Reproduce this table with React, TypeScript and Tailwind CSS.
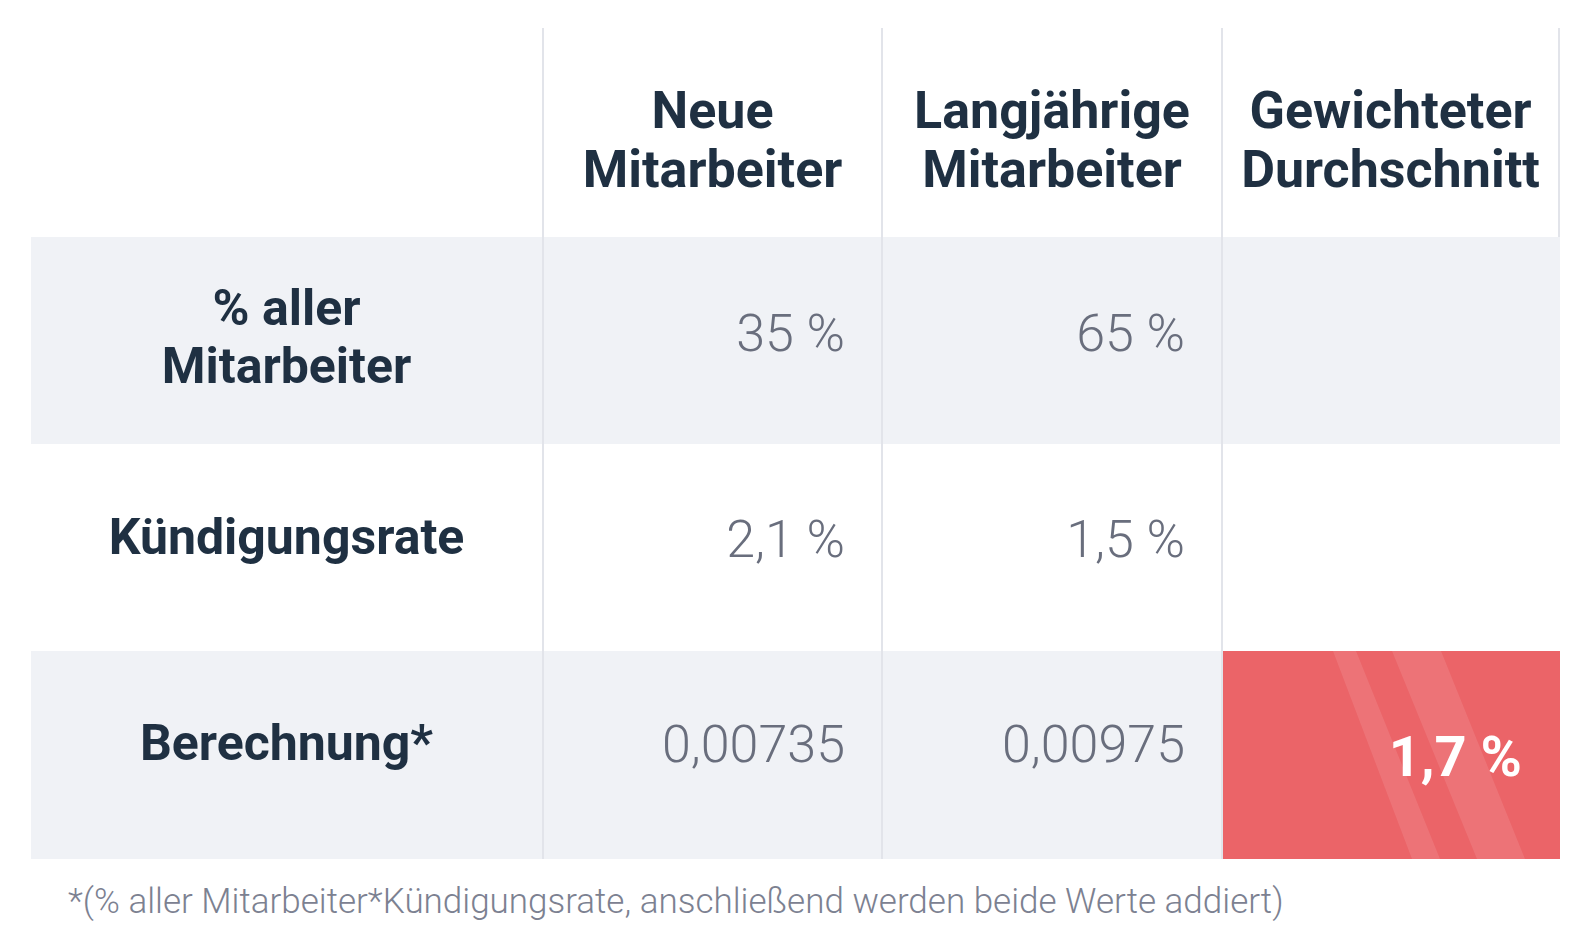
import React from "react";

const head = "font-['Roboto',sans-serif] font-bold text-[#1f3042]";
const num = "font-['Roboto',sans-serif] font-light text-[#696e7d] text-[52px] leading-[60px]";

function HeadCell({ lines, right = false }: { lines: string[]; right?: boolean }) {
  return (
    <div
      className={`flex items-center justify-center pt-[14px] border-l-2 border-[#e2e4ea] ${right ? "border-r-2" : ""}`}
    >
      <div className={`${head} text-[52px] leading-[59px] text-center`}>
        {lines.map((l) => (
          <div key={l}>{l}</div>
        ))}
      </div>
    </div>
  );
}

function LabelCell({ lines, shaded, pb }: { lines: string[]; shaded?: boolean; pb: string }) {
  return (
    <div className={`flex items-center justify-center ${pb} ${shaded ? "bg-[#f0f2f6]" : ""}`}>
      <div className={`${head} text-[50px] leading-[58px] text-center`}>
        {lines.map((l) => (
          <div key={l}>{l}</div>
        ))}
      </div>
    </div>
  );
}

function NumCell({ value, shaded, pb }: { value: string; shaded?: boolean; pb: string }) {
  return (
    <div className={`flex items-center justify-end pr-[36px] ${pb} border-l-2 border-[#e2e4ea] ${shaded ? "bg-[#f0f2f6]" : ""}`}>
      <span className={num}>{value}</span>
    </div>
  );
}

export default function App() {
  return (
    <div className="w-[1594px] h-[944px] bg-white pl-[31px] pt-[28px]">
      <div className="grid grid-cols-[511px_339px_340px_339px] grid-rows-[209px_207px_207px_208px]">
        <div />
        <HeadCell lines={["Neue", "Mitarbeiter"]} />
        <HeadCell lines={["Langjährige", "Mitarbeiter"]} />
        <HeadCell lines={["Gewichteter", "Durchschnitt"]} right />

        <LabelCell lines={["% aller", "Mitarbeiter"]} shaded pb="pb-[8px]" />
        <NumCell value="35 %" shaded pb="pb-[14px]" />
        <NumCell value="65 %" shaded pb="pb-[14px]" />
        <div className="bg-[#f0f2f6] border-l-2 border-[#e2e4ea]" />

        <LabelCell lines={["Kündigungsrate"]} pb="pb-[22px]" />
        <NumCell value="2,1 %" pb="pb-[16px]" />
        <NumCell value="1,5 %" pb="pb-[16px]" />
        <div className="border-l-2 border-[#e2e4ea]" />

        <LabelCell lines={["Berechnung*"]} shaded pb="pb-[24px]" />
        <NumCell value="0,00735" shaded pb="pb-[20px]" />
        <NumCell value="0,00975" shaded pb="pb-[20px]" />
        <div className="relative bg-[#eb6468] border-l-2 border-[#e2e4ea] flex items-center justify-end pr-[38px] overflow-hidden">
          <svg className="absolute inset-0" width="337" height="208" viewBox="0 0 337 208">
            <polygon points="110,0 133,0 217,208 189,208" fill="#ffffff" fillOpacity="0.1" />
            <polygon points="169,0 218,0 302,208 254,208" fill="#ffffff" fillOpacity="0.1" />
          </svg>
          <span className="relative font-['Roboto',sans-serif] font-bold text-white text-[56px] leading-[60px] pt-[4px]">1,7 %</span>
        </div>
      </div>
      <div className="pl-[37px] pt-[22px] font-['Roboto',sans-serif] font-light text-[35px] leading-[42px] text-[#7c8191]">
        *(% aller Mitarbeiter*Kündigungsrate, anschließend werden beide Werte addiert)
      </div>
    </div>
  );
}
